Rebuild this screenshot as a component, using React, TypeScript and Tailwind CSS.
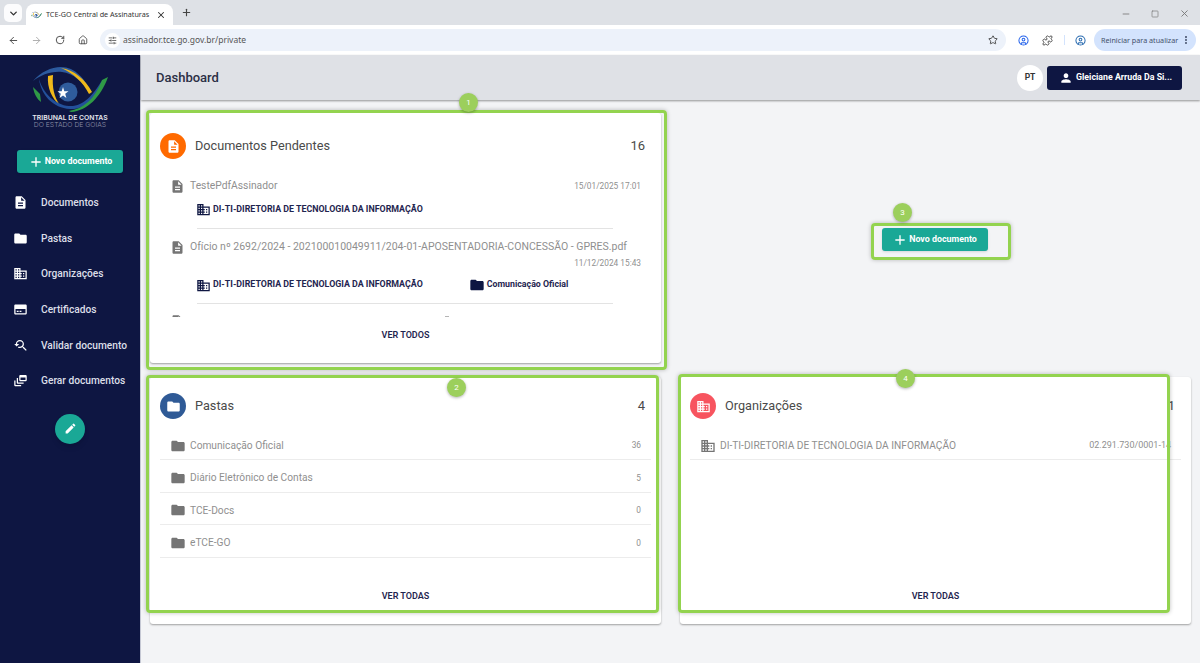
import type { ReactNode } from 'react';
import { ArrowLeft, ArrowRight, ChevronDown, CircleUser, EllipsisVertical, Home, Minus, Plus, Puzzle, RotateCw, SlidersHorizontal, Square, Star, X } from 'lucide-react';
import {
  MdAdd,
  MdDescription,
  MdDomain,
  MdDynamicFeed,
  MdEdit,
  MdFolder,
  MdPerson,
  MdYoutubeSearchedFor,
} from 'react-icons/md';

const Logo = ({ className }: { className: string }) => (
  <svg viewBox="0 0 75 46" className={className}>
    {/* top swoosh */}
    <path d="M0 14 C8 5 18 0 28 0 C42 0 53 12 58 27 C50 15 40 6 29 5 C18 4 8 8 0 14Z" fill="#2c5a9e" />
    <path d="M28 1 C41 3 52 12 59 25 L56 27 C50 15 40 6 28 1Z" fill="#f0b91a" />
    {/* left crescents */}
    <path d="M15 9 L20 8 C19 20 21 30 27 38 C19 32 14 21 15 9Z" fill="#f0b91a" />
    <path d="M0 20 L7 27 L8 35 C4 32 1 27 0 20Z" fill="#2f9a46" />
    {/* bottom swoosh */}
    <path d="M6 12 C10 26 22 38 36 39 C50 40 60 28 68 15 L72 13 C65 30 52 43 37 42 C20 41 8 28 6 12Z" fill="#23509a" />
    <path d="M36 44 C50 42 62 32 69 13 L75 10 C68 30 54 44 38 45Z" fill="#2f9a46" />
    <circle cx="35" cy="25" r="9.5" fill="#2f5c9c" />
    <path d="M30 20 L31.3 24.2 L35.5 24.2 L32.2 26.8 L33.4 31 L30 28.4 L26.6 31 L27.8 26.8 L24.5 24.2 L28.7 24.2Z" fill="#ffffff" />
  </svg>
);

const CertificateIcon = ({ size }: { size: number }) => (
  <svg viewBox="0 0 24 24" width={size} height={size} fill="currentColor">
    <path
      fillRule="evenodd"
      d="M4 4h16c1.1 0 2 .9 2 2v12c0 1.1-.9 2-2 2H4c-1.1 0-2-.9-2-2V6c0-1.1.9-2 2-2zm0 7v7h16v-7H4z"
    />
    <path d="M6 14h3v2H6zM10.5 14h3v2h-3z" />
  </svg>
);

const navItems = [
  { label: 'Documentos', icon: MdDescription },
  { label: 'Pastas', icon: MdFolder },
  { label: 'Organizações', icon: MdDomain },
  { label: 'Certificados', icon: CertificateIcon },
  { label: 'Validar documento', icon: MdYoutubeSearchedFor },
  { label: 'Gerar documentos', icon: MdDynamicFeed },
];

const folders = [
  { name: 'Comunicação Oficial', count: 36 },
  { name: 'Diário Eletrônico de Contas', count: 5 },
  { name: 'TCE-Docs', count: 0 },
  { name: 'eTCE-GO', count: 0 },
];

const BrowserBar = () => (
  <div className="h-[55px] shrink-0 [font-family:'Noto_Sans',sans-serif]">
    <div className="h-[25px] bg-[#dee1e6] flex items-end pl-1 relative">
      <div className="w-[18px] h-[18px] mb-[3px] bg-white/90 rounded-[5px] flex items-center justify-center text-[#333]">
        <ChevronDown size={11} strokeWidth={3} />
      </div>
      <div className="w-[147px] h-[21px] ml-1 bg-white rounded-t-lg flex items-center pl-[5px] pr-[7px] text-[#333]">
        <Logo className="w-[11px] h-[8px] mr-[4px]" />
        <span className="text-[7.2px] flex-1 whitespace-nowrap">TCE-GO Central de Assinaturas</span>
        <X size={10} strokeWidth={2.5} />
      </div>
      <Plus size={11} strokeWidth={2.5} className="ml-2 mb-[7px] text-[#444]" />
      <div className="ml-auto flex items-center gap-[20px] pr-[10px] mb-[6px] text-[#777]">
        <Minus size={10} />
        <Square size={8} />
        <X size={11} />
      </div>
    </div>
    <div className="h-[30px] bg-white flex items-center pl-[8px] pr-1 text-[#444]">
      <ArrowLeft size={11} strokeWidth={2} />
      <ArrowRight size={11} strokeWidth={2} className="ml-[12px] text-[#aaa]" />
      <RotateCw size={10} strokeWidth={2.2} className="ml-[13px]" />
      <Home size={10} strokeWidth={2} className="ml-[13px]" />
      <div className="w-[906px] h-[22px] ml-[12px] bg-[#edf2fa] rounded-full flex items-center pl-[5px] pr-[8px]">
        <div className="w-[15px] h-[15px] bg-white rounded-full flex items-center justify-center">
          <SlidersHorizontal size={9} />
        </div>
        <span className="text-[8.5px] ml-[3px] text-[#555]">assinador.tce.go.gov.br/private</span>
        <Star size={10} strokeWidth={2.2} className="ml-auto" />
      </div>
      <CircleUser size={11} strokeWidth={2.2} className="ml-[12px] text-[#2563eb]" />
      <Puzzle size={11} strokeWidth={2} className="ml-[13px]" />
      <div className="w-px h-[10px] bg-[#d3e3fd] ml-[11px]" />
      <CircleUser size={11} strokeWidth={2.2} className="ml-[10px] text-[#2b6cb0]" />
      <div className="w-[102px] h-[22px] ml-[8px] bg-[#d3e3fd] rounded-full flex items-center pl-[7px] text-[#44506a]">
        <span className="text-[7.2px] whitespace-nowrap flex-1">Reiniciar para atualizar</span>
        <EllipsisVertical size={10} strokeWidth={3} className="mr-[5px]" />
      </div>
    </div>
  </div>
);

const NewDocButton = ({ className = '' }: { className?: string }) => (
  <button className={`w-[106px] h-[23px] bg-[#1aa896] rounded-[3px] flex items-center justify-center text-white shadow ${className}`}>
    <MdAdd size={16} />
    <span className="ml-px text-[8.85px] font-bold whitespace-nowrap">Novo documento</span>
  </button>
);

const Sidebar = () => (
  <aside className="w-[140px] shrink-0 bg-[#0e1642] flex flex-col items-center text-white">
    <Logo className="w-[75px] h-[46px] mt-3" />
    <div className="mt-[1px] text-center text-[6.8px] leading-[7px] [font-family:Inter,sans-serif]">
      <p className="font-semibold text-[#e6e8ee]">TRIBUNAL DE CONTAS</p>
      <p className="font-light text-[#8e93a8]">DO ESTADO DE GOIAS</p>
    </div>
    <NewDocButton className="mt-[22px]" />
    <nav className="w-full mt-[12px]">
      {navItems.map((item) => (
        <div key={item.label} className="h-[35.6px] flex items-center pl-[13px]">
          <item.icon size={15} />
          <span className="ml-[13px] text-[10.2px] font-medium text-[#dcdfe8] whitespace-nowrap">{item.label}</span>
        </div>
      ))}
    </nav>
    <div className="mt-[15px] w-[30px] h-[30px] rounded-full bg-[#1aa896] flex items-center justify-center shadow-md">
      <MdEdit size={13} />
    </div>
  </aside>
);

const Card = ({
  icon,
  iconBg,
  title,
  count,
  footer,
  headerHeight,
  children,
}: {
  icon: ReactNode;
  iconBg: string;
  title: string;
  count: number;
  footer: string;
  headerHeight: string;
  children: ReactNode;
}) => (
  <section className="bg-white rounded-[3px] shadow-[0_1px_2px_rgba(0,0,0,0.35)] flex flex-col px-[10px]">
    <header className={`shrink-0 flex items-center pr-[6px] ${headerHeight}`}>
      <div className={`w-[26px] h-[26px] rounded-full flex items-center justify-center text-white ${iconBg}`}>{icon}</div>
      <h2 className="ml-[9px] text-[12.7px] text-[#4a4a4a]">{title}</h2>
      <span className="ml-auto text-[13px] text-[#4a4a4a]">{count}</span>
    </header>
    <div className="flex-1 min-h-0 -mt-[7px]">{children}</div>
    <footer className="shrink-0 h-[46px] text-center text-[9px] font-semibold text-[#1f2550] pt-[12px]">{footer}</footer>
  </section>
);

const OrgTag = () => (
  <div className="flex items-center -ml-px">
    <MdDomain size={15} className="text-[#0e1642]" />
    <span className="ml-[2px] text-[8.85px] font-bold text-[#1f2550] whitespace-nowrap">DI-TI-DIRETORIA DE TECNOLOGIA DA INFORMAÇÃO</span>
  </div>
);

const PendingDocs = () => (
  <div className="h-[145px] overflow-hidden px-[10px]">
    <div className="flex items-center h-[16px] mt-[6px]">
      <MdDescription size={15} className="text-[#757575]" />
      <span className="ml-[5px] text-[10.3px] text-[#8f8f8f]">TestePdfAssinador</span>
      <span className="ml-auto text-[8.3px] text-[#8f8f8f]">15/01/2025 17:01</span>
    </div>
    <div className="mt-[8px] ml-[27px] w-[416px]">
      <OrgTag />
      <div className="mt-[11px] border-b border-[#e3e3e3]" />
    </div>
    <div className="flex items-center h-[16px] mt-[10px]">
      <MdDescription size={15} className="text-[#757575]" />
      <span className="ml-[5px] text-[10.5px] text-[#8f8f8f] whitespace-nowrap">
        Ofício nº 2692/2024 - 202100010049911/204-01-APOSENTADORIA-CONCESSÃO - GPRES.pdf
      </span>
    </div>
    <div className="text-right text-[8.3px] text-[#8f8f8f] leading-[10px] mt-[3px]">11/12/2024 15:43</div>
    <div className="mt-[9px] ml-[27px] w-[416px]">
      <div className="flex items-center">
        <OrgTag />
        <MdFolder size={16} className="ml-[46px] text-[#0e1642]" />
        <span className="ml-[2px] text-[8.8px] font-bold text-[#1f2550] whitespace-nowrap">Comunicação Oficial</span>
      </div>
      <div className="mt-[10px] border-b border-[#e3e3e3]" />
    </div>
    <div className="flex items-start mt-[10px]">
      <MdDescription size={15} className="text-[#757575]" />
      <div className="ml-[260px] mt-[2px] w-[4px] h-px bg-[#b5b5b5]" />
    </div>
  </div>
);

const ListRow = ({ icon, name, value }: { icon: ReactNode; name: string; value: ReactNode }) => (
  <div className="h-[32.4px] pt-[4px] flex items-center px-[10px] border-b border-[#ececec] text-[#8f8f8f]">
    {icon}
    <span className="ml-[4px] text-[10.2px] whitespace-nowrap">{name}</span>
    <span className="ml-auto text-[8.3px]">{value}</span>
  </div>
);

const Annotation = ({ n, box, badge }: { n: number; box: string; badge: string }) => (
  <>
    <div className={`absolute pointer-events-none border-[3px] border-[#93d34f] rounded-[4px] shadow-[0_0_4px_rgba(0,0,0,0.25)] ${box}`} />
    <div className={`absolute w-[19px] h-[19px] rounded-full bg-[#9ccf5c] text-white text-[8px] flex items-center justify-center shadow-[0_1px_3px_rgba(0,0,0,0.3)] ${badge}`}>
      {n}
    </div>
  </>
);

export default function App() {
  return (
    <div className="relative w-[1200px] h-[663px] overflow-hidden flex flex-col bg-[#f3f4f6] [font-family:Roboto,sans-serif]">
      <BrowserBar />
      <div className="flex-1 min-h-0 flex">
        <Sidebar />
        <main className="flex-1 min-w-0 flex flex-col border-l border-[#c5c8d4]">
          <div className="h-[45px] shrink-0 bg-[#dfe1e6] shadow-[0_1px_2px_rgba(0,0,0,0.4)] flex items-center pl-[15px] pr-[18px]">
            <h1 className="mt-px text-[13px] font-medium text-[#2b2f45]">Dashboard</h1>
            <div className="ml-auto w-[26px] h-[26px] bg-white rounded-full flex items-center justify-center text-[8.5px] font-bold text-[#333]">PT</div>
            <div className="ml-1 w-[135px] h-[24px] bg-[#0e1642] rounded-[3px] flex items-center pl-[12px] text-white">
              <MdPerson size={14} />
              <span className="ml-[3px] text-[8.8px] font-bold whitespace-nowrap">Gleiciane Arruda Da Si...</span>
            </div>
          </div>
          <div className="flex-1 min-h-0 grid grid-cols-[511px_511px] grid-rows-[250px_247px] gap-x-[19px] gap-y-[14px] pl-[9px] pt-[13px]">
            <Card
              icon={<MdDescription size={15} />}
              iconBg="bg-[#ff6a00]"
              title="Documentos Pendentes"
              count={16}
              footer="VER TODOS"
              headerHeight="h-[66px]"
            >
              <PendingDocs />
            </Card>
            <div className="flex items-center justify-center pt-[3px] pr-[2px]">
              <NewDocButton />
            </div>
            <Card
              icon={<MdFolder size={15} />}
              iconBg="bg-[#2f5a96]"
              title="Pastas"
              count={4}
              footer="VER TODAS"
              headerHeight="h-[58px]"
            >
              {folders.map((f) => (
                <ListRow key={f.name} icon={<MdFolder size={16} className="text-[#757575]" />} name={f.name} value={f.count} />
              ))}
            </Card>
            <Card
              icon={<MdDomain size={15} />}
              iconBg="bg-[#f7545f]"
              title="Organizações"
              count={1}
              footer="VER TODAS"
              headerHeight="h-[58px]"
            >
              <ListRow
                icon={<MdDomain size={16} className="text-[#757575]" />}
                name="DI-TI-DIRETORIA DE TECNOLOGIA DA INFORMAÇÃO"
                value={<span className="text-[9px]">02.291.730/0001-14</span>}
              />
            </Card>
          </div>
        </main>
      </div>
      <Annotation n={1} box="left-[146px] top-[110px] w-[521px] h-[260px]" badge="left-[459px] top-[93px]" />
      <Annotation n={2} box="left-[146px] top-[375px] w-[513px] h-[238px]" badge="left-[447px] top-[378px]" />
      <Annotation n={3} box="left-[871px] top-[223px] w-[140px] h-[37px]" badge="left-[893px] top-[203px]" />
      <Annotation n={4} box="left-[678px] top-[374px] w-[492px] h-[239px]" badge="left-[896px] top-[369px]" />
    </div>
  );
}
